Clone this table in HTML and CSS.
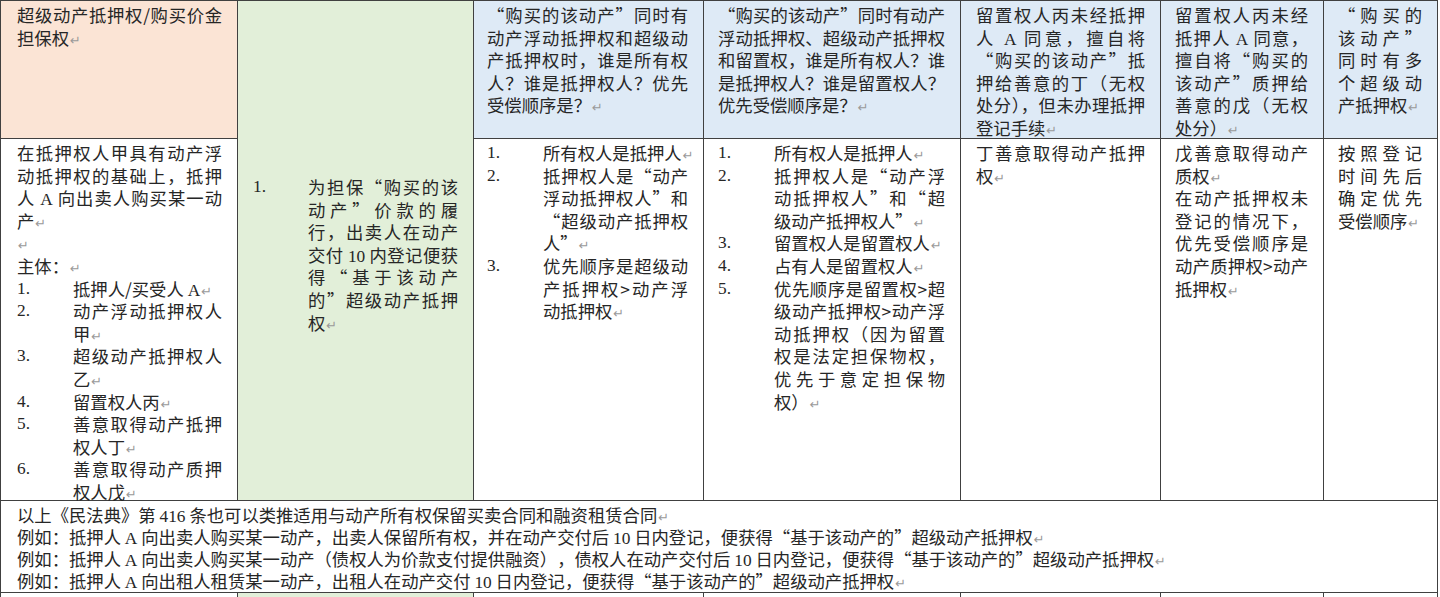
FILE: index.html
```html
<!DOCTYPE html>
<html lang="zh-CN">
<head>
<meta charset="utf-8">
<title>超级动产抵押权</title>
<link rel="stylesheet" href="styles.css">
</head>
<body>
<div class="sheet">
  <!-- header row -->
  <div class="cell c1 peach"><p>超级动产抵押权/购买价金担保权<i class="pm">↵</i></p></div>
  <div class="cell c2 green tall">
    <div class="li"><span class="n">1.</span><p>为担保“购买的该动产”价款的履行，出卖人在动产交付 <span class="l">10</span> 内登记便获得“基于该动产的”超级动产抵押权<i class="pm">↵</i></p></div>
  </div>
  <div class="cell c3 blue"><p>“购买的该动产”同时有动产浮动抵押权和超级动产抵押权时，谁是所有权人？谁是抵押权人？优先受偿顺序是？<i class="pm">↵</i></p></div>
  <div class="cell c4 blue"><p>“购买的该动产”同时有动产浮动抵押权、超级动产抵押权和留置权，谁是所有权人？谁是抵押权人？谁是留置权人？优先受偿顺序是？<i class="pm">↵</i></p></div>
  <div class="cell c5 blue"><p>留置权人丙未经抵押人 <span class="l">A</span> 同意，擅自将“购买的该动产”抵押给善意的丁（无权处分），但未办理抵押登记手续<i class="pm">↵</i></p></div>
  <div class="cell c6 blue"><p>留置权人丙未经抵押人 <span class="l">A</span> 同意，擅自将“购买的该动产”质押给善意的戊（无权处分）<i class="pm">↵</i></p></div>
  <div class="cell c7 blue"><p>“购买的该动产”同时有多个超级动产抵押权<i class="pm">↵</i></p></div>

  <!-- body row -->
  <div class="cell c1">
    <p>在抵押权人甲具有动产浮动抵押权的基础上，抵押人 <span class="l">A</span> 向出卖人购买某一动产<i class="pm">↵</i></p>
    <p><i class="pm">↵</i></p>
    <p>主体：<i class="pm">↵</i></p>
    <div class="li"><span class="n">1.</span><p>抵押人/买受人 <span class="l">A</span><i class="pm">↵</i></p></div>
    <div class="li"><span class="n">2.</span><p>动产浮动抵押权人甲<i class="pm">↵</i></p></div>
    <div class="li"><span class="n">3.</span><p>超级动产抵押权人乙<i class="pm">↵</i></p></div>
    <div class="li"><span class="n">4.</span><p>留置权人丙<i class="pm">↵</i></p></div>
    <div class="li"><span class="n">5.</span><p>善意取得动产抵押权人丁<i class="pm">↵</i></p></div>
    <div class="li"><span class="n">6.</span><p>善意取得动产质押权人戊<i class="pm">↵</i></p></div>
  </div>
  <div class="cell c3">
    <div class="li"><span class="n">1.</span><p>所有权人是抵押人<i class="pm">↵</i></p></div>
    <div class="li"><span class="n">2.</span><p>抵押权人是“动产浮动抵押权人”和“超级动产抵押权人”<i class="pm">↵</i></p></div>
    <div class="li"><span class="n">3.</span><p>优先顺序是超级动产抵押权&gt;动产浮动抵押权<i class="pm">↵</i></p></div>
  </div>
  <div class="cell c4">
    <div class="li"><span class="n">1.</span><p>所有权人是抵押人<i class="pm">↵</i></p></div>
    <div class="li"><span class="n">2.</span><p>抵押权人是“动产浮动抵押权人”和“超级动产抵押权人”<i class="pm">↵</i></p></div>
    <div class="li"><span class="n">3.</span><p>留置权人是留置权人<i class="pm">↵</i></p></div>
    <div class="li"><span class="n">4.</span><p>占有人是留置权人<i class="pm">↵</i></p></div>
    <div class="li"><span class="n">5.</span><p>优先顺序是留置权&gt;超级动产抵押权&gt;动产浮动抵押权（因为留置权是法定担保物权，优先于意定担保物权）<i class="pm">↵</i></p></div>
  </div>
  <div class="cell c5"><p>丁善意取得动产抵押权<i class="pm">↵</i></p></div>
  <div class="cell c6">
    <p>戊善意取得动产质权<i class="pm">↵</i></p>
    <p>在动产抵押权未登记的情况下，优先受偿顺序是动产质押权&gt;动产抵押权<i class="pm">↵</i></p>
  </div>
  <div class="cell c7"><p>按照登记时间先后确定优先受偿顺序<i class="pm">↵</i></p></div>

  <!-- footer row -->
  <div class="cell foot">
    <p>以上《民法典》第 <span class="l">416</span> 条也可以类推适用与动产所有权保留买卖合同和融资租赁合同<i class="pm">↵</i></p>
    <p>例如：抵押人 <span class="l">A</span> 向出卖人购买某一动产，出卖人保留所有权，并在动产交付后 <span class="l">10</span> 日内登记，便获得“基于该动产的”超级动产抵押权<i class="pm">↵</i></p>
    <p>例如：抵押人 <span class="l">A</span> 向出卖人购买某一动产（债权人为价款支付提供融资），债权人在动产交付后 <span class="l">10</span> 日内登记，便获得“基于该动产的”超级动产抵押权<i class="pm">↵</i></p>
    <p>例如：抵押人 <span class="l">A</span> 向出租人租赁某一动产，出租人在动产交付 <span class="l">10</span> 日内登记，便获得“基于该动产的”超级动产抵押权<i class="pm">↵</i></p>
  </div>

  <!-- next row (cut off) -->
  <div class="cell c1"></div>
  <div class="cell c2 green"></div>
  <div class="cell c3"></div>
  <div class="cell c4"></div>
  <div class="cell c5"></div>
  <div class="cell c6"></div>
  <div class="cell c7"></div>
</div>
</body>
</html>
```

FILE: styles.css
```css
* { box-sizing: border-box; }

html, body {
  margin: 0;
  padding: 0;
  background: #ffffff;
  overflow: hidden;
}

body {
  font-family: "Noto Sans CJK SC", "Liberation Serif", sans-serif;
  font-size: 17.33px;
  line-height: 22.6px;
  color: #262626;
}

.sheet {
  display: grid;
  width: 1438px;
  grid-template-columns: 236px 235px 229px 256px 199px 162px 113px;
  grid-template-rows: 137px 361px 91px 20px;
  gap: 1px;
  padding: 1px;
  background: #404040;
}

.cell {
  background: #ffffff;
  padding: 3px 15px 0 15px;
  text-align: justify;
  min-width: 0;
  text-spacing-trim: space-all;
}

.cell p {
  margin: 0;
}

.peach { background: #fbe4d5; }
.green { background: #e2efd9; }
.blue  { background: #deeaf6; }

.c1 { padding-left: 16px; }
.c2 { padding-left: 15px; }
.c3 { padding-left: 13px; }
.c4 { padding-left: 14px; }
.c5 { padding-left: 15px; text-spacing-trim: normal; }
.c6 { padding-left: 14px; }
.c7 { padding-left: 14px; }

.tall {
  grid-row: span 2;
  padding-top: 175px;
}

.c2 .li { grid-template-columns: 55px 1fr; }

.foot {
  grid-column: 1 / -1;
  padding-left: 16px;
  line-height: 22px;
}

.li {
  display: grid;
  grid-template-columns: 56px 1fr;
}

.n {
  font-family: "Liberation Serif", serif;
}

.l {
  font-family: "Liberation Serif", serif;
  line-height: 0;
}

.pm {
  display: inline-block;
  width: 0;
  line-height: 0;
  white-space: nowrap;
  font-style: normal;
  font-family: "DejaVu Sans", sans-serif;
  font-size: 13px;
  color: #9a9a9a;
  padding-left: 1px;
}
```
